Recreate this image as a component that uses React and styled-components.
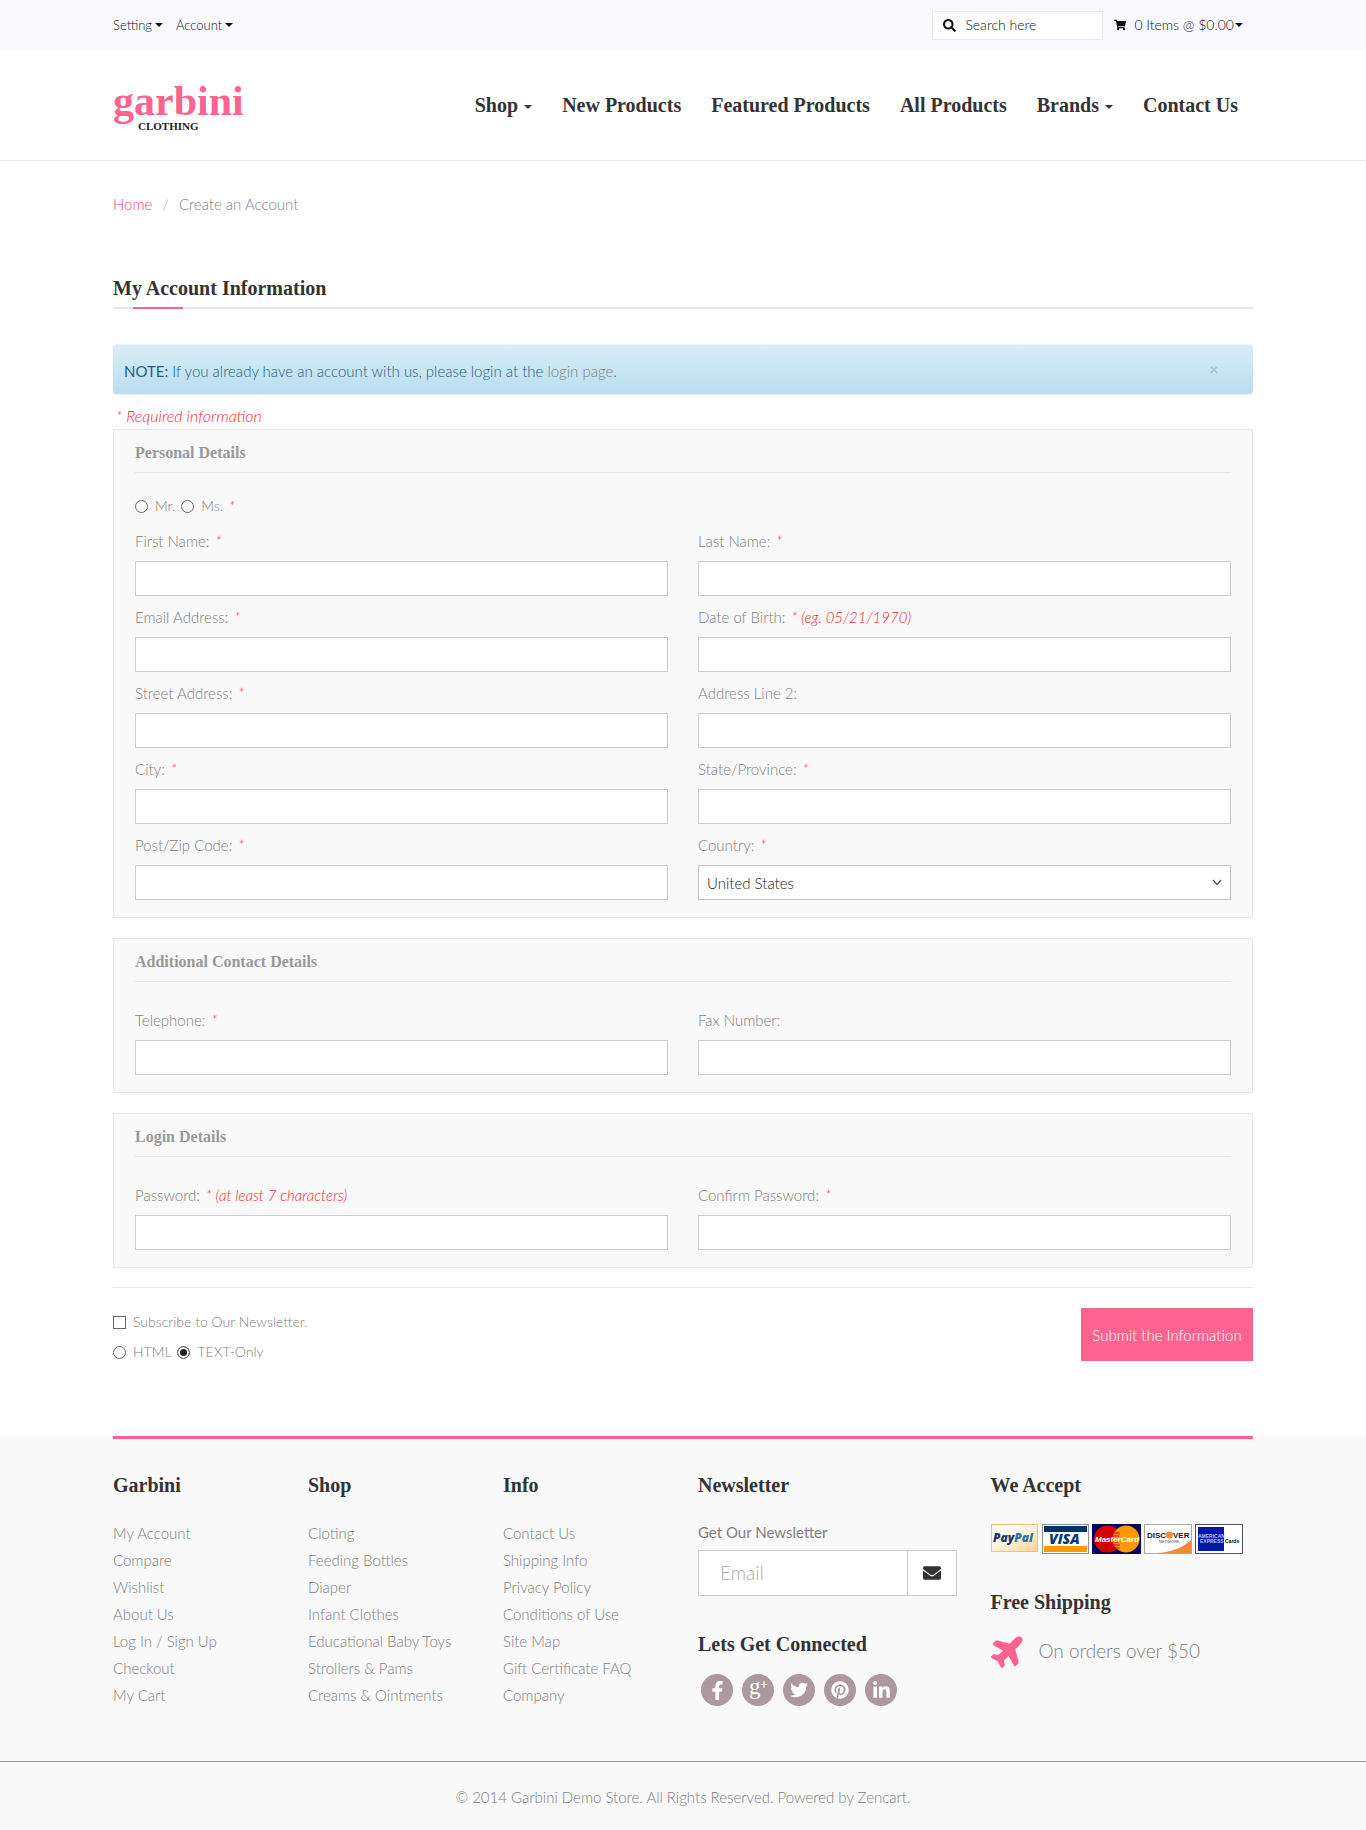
import React from "react";
import styled, { createGlobalStyle } from "styled-components";
import {
  FaSearch,
  FaShoppingCart,
  FaEnvelope,
  FaPlane,
  FaFacebookF,
  FaTwitter,
  FaPinterest,
  FaLinkedinIn,
} from "react-icons/fa";
/** Vars */
const PINK = "#fd638f";
const DARK = "#333333";
const GREY = "#999999";
const TEXT = "#808080";
const LINE = "#e7e7e7";
const SERIF = `"Liberation Serif", serif`;
const SANS = `Lato, "Open Sans", sans-serif`;
//
const GlobalStyle = createGlobalStyle`
  * {
    box-sizing: border-box;
  }
  body {
    margin: 0;
    background: #ffffff;
    color: ${TEXT};
    font: 300 15px/20px ${SANS};
  }
  h1, h2, h3, p, ul, ol {
    margin: 0;
    padding: 0;
    list-style: none;
  }
  a {
    color: inherit;
    text-decoration: none;
  }
  button, input, select {
    font: inherit;
    margin: 0;
  }
`;
/** Layout */
const Container = styled.div`
  max-width: 1140px;
  margin: 0 auto;
`;
const Caret = styled.span`
  display: inline-block;
  border: 4px solid transparent;
  border-top-color: currentColor;
  border-bottom: 0;
  vertical-align: middle;
  margin-left: ${({ $gap }) => $gap || 3}px;
`;
/** Top bar */
const TopBar = styled.div`
  background: #f9f9fe;
`;
const TopInner = styled(Container)`
  display: flex;
  align-items: center;
  justify-content: space-between;
  height: 50px;
  color: #111111;
`;
const TopGroup = styled.div`
  display: flex;
  align-items: center;
  gap: ${({ $gap }) => $gap}px;
  padding-right: 10px;
`;
const TopButton = styled.button`
  display: flex;
  align-items: center;
  padding: 0;
  border: 0;
  background: none;
  color: #111111;
  font-size: ${({ $size }) => $size || 13}px;
  cursor: pointer;

  svg {
    margin-right: 8px;
  }
`;
const Search = styled.label`
  display: flex;
  align-items: center;
  gap: 9px;
  width: 171px;
  height: 29px;
  padding: 0 10px;
  border: 1px solid #e8e8ec;
  background: #ffffff;

  svg {
    flex: none;
  }
  input {
    width: 100%;
    min-width: 0;
    padding: 0;
    border: 0;
    outline: 0;
    font-size: 14px;
  }
  input::placeholder {
    color: #111111;
    opacity: 1;
  }
`;
/** Header */
const Header = styled.header`
  border-bottom: 1px solid ${LINE};
`;
const HeaderInner = styled(Container)`
  display: flex;
  align-items: center;
  justify-content: space-between;
  height: 110px;
`;
const Logo = styled.a`
  display: grid;
  padding-top: 4px;
  font-family: ${SERIF};
  font-weight: 700;
`;
const LogoName = styled.span`
  font-size: 42px;
  line-height: 38px;
  color: ${PINK};
`;
const LogoSub = styled.span`
  padding-left: 25px;
  font-size: 11px;
  line-height: 12px;
  color: #222222;
`;
const Nav = styled.nav`
  display: flex;
  gap: 30px;
  padding-right: 15px;
  font: 700 20px/24px ${SERIF};
  color: ${DARK};
`;
/** Page head */
const Breadcrumb = styled.ol`
  display: flex;
  padding: 33px 0 62px;

  li + li::before {
    content: "/";
    padding: 0 10px;
    color: #bbbbbb;
  }
  a {
    color: #ff3f78;
  }
`;
const PageTitle = styled.h1`
  position: relative;
  padding-bottom: 7px;
  border-bottom: 2px solid ${LINE};
  font: 700 20px/24px ${SERIF};
  color: ${DARK};

  &::after {
    content: "";
    position: absolute;
    left: 20px;
    bottom: -2px;
    width: 50px;
    height: 2px;
    background: ${PINK};
  }
`;
const Alert = styled.div`
  display: flex;
  justify-content: space-between;
  height: 50px;
  margin: 35px 0 12px;
  padding: 17px 34px 0 11px;
  border-radius: 4px;
  background: linear-gradient(#d9edf7, #b9def0);
  box-shadow: 0 1px 2px rgba(0, 0, 0, 0.08), inset 0 1px 0 rgba(255, 255, 255, 0.3);
  color: #1f5f80;

  strong {
    font-weight: 400;
  }
  a {
    color: ${TEXT};
  }
`;
const Close = styled.button`
  width: 10px;
  height: 16px;
  padding: 0;
  border: 0;
  background: none;
  color: #a5c8d9;
  font-size: 16px;
  line-height: 16px;
  font-weight: 700;
`;
const Red = styled.em`
  margin-left: ${({ $gap }) => $gap || 0}px;
  color: #ff1f1f;
  font-style: italic;
`;
const RequiredNote = styled.p`
  padding: 0 3px;
  margin-bottom: 3px;
  font-size: 16px;
`;
/** Form */
const Panel = styled.section`
  margin-bottom: 20px;
  padding: 0 21px 17px;
  border: 1px solid ${LINE};
  background: #f9f9f9;

  &:last-of-type {
    margin-bottom: 0;
  }
`;
const PanelTitle = styled.h2`
  padding: 13px 0 9px;
  border-bottom: 1px solid ${LINE};
  font: 700 16px/20px ${SERIF};
  color: ${GREY};
`;
const TitleRow = styled.div`
  display: flex;
  align-items: center;
  gap: 6px;
  padding-top: 23px;
`;
const Fields = styled.div`
  display: grid;
  grid-template-columns: 1fr 1fr;
  gap: 11px 30px;
  padding-top: ${({ $top }) => $top}px;
`;
const Field = styled.div`
  display: grid;
  gap: 10px;
`;
const TextInput = styled.input`
  width: 100%;
  height: 35px;
  padding: 0 8px;
  border: 1px solid #cccccc;
  background: #ffffff;
`;
const SelectBox = styled.div`
  position: relative;

  select {
    appearance: none;
    display: block;
    width: 100%;
    height: 35px;
    padding: 0 8px;
    border: 1px solid #c2c2c2;
    border-radius: 0;
    background: #ffffff;
    color: #222222;
  }
  svg {
    position: absolute;
    right: 9px;
    top: 14px;
    pointer-events: none;
  }
`;
const Choice = styled.label`
  display: flex;
  align-items: center;
  gap: 7px;
  font-size: 14px;

  input {
    appearance: none;
    flex: none;
    width: 13px;
    height: 13px;
    border: 1px solid #666666;
    background: #ffffff;
  }
  input[type="radio"] {
    border-radius: 50%;
  }
  input:checked {
    background: #222222;
    box-shadow: inset 0 0 0 2px #ffffff;
  }
`;
const Actions = styled.div`
  display: flex;
  align-items: flex-start;
  justify-content: space-between;
  margin: 19px 0 74px;
  padding-top: 20px;
  border-top: 1px solid ${LINE};
`;
const Options = styled.div`
  display: grid;
  gap: 10px;
  padding-top: 4px;
`;
const OptionRow = styled.div`
  display: flex;
  gap: 6px;
`;
const Submit = styled.button`
  width: 172px;
  height: 53px;
  padding: 0;
  border: 0;
  background: ${PINK};
  color: #ffffff;
  cursor: pointer;
`;
/** Footer */
const Footer = styled.footer`
  background: #f9f9f9;
`;
const FooterInner = styled(Container)`
  padding: 34px 0 52px;
  border-top: 3px solid ${PINK};
`;
const FooterGrid = styled.div`
  display: grid;
  grid-template-columns: 2fr 2fr 2fr 3fr 3fr;
  margin: 0 -15px;
`;
const Column = styled.div`
  min-width: 0;
  padding: 0 15px;
  white-space: nowrap;
`;
const FooterTitle = styled.h3`
  margin-bottom: ${({ $gap }) => $gap || 22}px;
  font: 700 20px/24px ${SERIF};
  color: ${DARK};
`;
const FooterLinks = styled.ul`
  line-height: 27px;
`;
const NewsLabel = styled.label`
  display: block;
  margin-bottom: 4px;
  line-height: 27px;
  font-weight: 400;
`;
const NewsForm = styled.form`
  display: flex;
  max-width: 259px;
  height: 46px;
  margin-bottom: 36px;
  border: 1px solid #cccccc;
  background: #ffffff;

  input {
    flex: 1;
    min-width: 0;
    padding: 0 21px;
    border: 0;
    background: none;
    font-size: 19px;
  }
  input::placeholder {
    color: #aaaaaa;
    opacity: 1;
  }
  button {
    display: grid;
    place-items: center;
    width: 49px;
    padding: 0;
    border: 0;
    border-left: 1px solid #cccccc;
    background: none;
    color: ${DARK};
  }
`;
const Socials = styled.div`
  display: flex;
  gap: 9px;
  padding-left: 3px;
`;
const Social = styled.a`
  display: grid;
  place-items: center;
  width: 32px;
  height: 32px;
  border-radius: 50%;
  background: #ab999f;
  color: #ffffff;
`;
const Cards = styled.div`
  display: flex;
  gap: 3px;
  margin-bottom: 36px;

  svg {
    display: block;
  }
`;
const Shipping = styled.p`
  display: flex;
  align-items: center;
  gap: 12px;
  font-size: 19px;
  line-height: 33px;
`;
const Copyright = styled.div`
  padding: 25px 0 24px;
  border-top: 1px solid ${PINK};
  text-align: center;
`;
/** Data */
const personal = [
  { id: "firstname", label: "First Name:", required: true },
  { id: "lastname", label: "Last Name:", required: true },
  { id: "email", label: "Email Address:", required: true, type: "email" },
  { id: "dob", label: "Date of Birth:", required: true, hint: "(eg. 05/21/1970)" },
  { id: "street", label: "Street Address:", required: true },
  { id: "suburb", label: "Address Line 2:" },
  { id: "city", label: "City:", required: true },
  { id: "state", label: "State/Province:", required: true },
  { id: "postcode", label: "Post/Zip Code:", required: true },
  { id: "country", label: "Country:", required: true, options: ["United States"] },
];
const contact = [
  { id: "telephone", label: "Telephone:", required: true, type: "tel" },
  { id: "fax", label: "Fax Number:", type: "tel" },
];
const login = [
  { id: "password", label: "Password:", required: true, hint: "(at least 7 characters)", type: "password" },
  { id: "confirm", label: "Confirm Password:", required: true, type: "password" },
];
const navItems = [
  { text: "Shop", menu: true },
  { text: "New Products" },
  { text: "Featured Products" },
  { text: "All Products" },
  { text: "Brands", menu: true },
  { text: "Contact Us" },
];
const footerLinks = {
  Garbini: ["My Account", "Compare", "Wishlist", "About Us", "Log In / Sign Up", "Checkout", "My Cart"],
  Shop: [
    "Cloting",
    "Feeding Bottles",
    "Diaper",
    "Infant Clothes",
    "Educational Baby Toys",
    "Strollers & Pams",
    "Creams & Ointments",
  ],
  Info: [
    "Contact Us",
    "Shipping Info",
    "Privacy Policy",
    "Conditions of Use",
    "Site Map",
    "Gift Certificate FAQ",
    "Company",
  ],
};
/** Parts */
function FormField({ id, label, required, hint, type, options }) {
  return (
    <Field>
      <label htmlFor={id}>
        {label}
        {required && <Red $gap={6}>*{hint && ` ${hint}`}</Red>}
      </label>
      {options ? (
        <SelectBox>
          <select id={id}>
            {options.map((o) => (
              <option key={o}>{o}</option>
            ))}
          </select>
          <svg width="10" height="7" viewBox="0 0 10 7" fill="none" stroke="#555" strokeWidth="1.3">
            <path d="M1 1l4 4.500L9 1" />
          </svg>
        </SelectBox>
      ) : (
        <TextInput id={id} type={type || "text"} />
      )}
    </Field>
  );
}
//
function PaymentCards() {
  return (
    <Cards>
      <svg width="48" height="29" role="img" aria-label="PayPal">
        <defs>
          <linearGradient id="pp" x1="0" y1="0" x2="1" y2="1">
            <stop offset="0.3" stopColor="#fffdf6" />
            <stop offset="1" stopColor="#fbd48f" />
          </linearGradient>
        </defs>
        <rect x="0.5" y="0.5" width="46" height="27" fill="url(#pp)" stroke="#f5be79" />
        <text x="2" y="18" fontFamily="Open Sans" fontWeight="800" fontStyle="italic" fontSize="12" fill="#1c3667">
          Pay<tspan fill="#2a72a8">Pal</tspan>
        </text>
      </svg>
      <svg width="47" height="30" role="img" aria-label="Visa">
        <rect x="0.5" y="0.5" width="46" height="29" fill="#fff" stroke="#8890a5" />
        <rect x="2" y="2" width="43" height="6" fill="#003263" />
        <rect x="2" y="22" width="43" height="6" fill="#ff9a00" />
        <text x="7" y="20" fontFamily="Open Sans" fontWeight="800" fontStyle="italic" fontSize="14" fill="#003a70">
          VISA
        </text>
      </svg>
      <svg width="49" height="30" role="img" aria-label="MasterCard">
        <rect width="49" height="30" fill="#00005e" />
        <circle cx="15.5" cy="15" r="13.5" fill="#d40000" />
        <circle cx="34" cy="15" r="13.5" fill="#ff9900" />
        <path d="M21 9h7M20 12h7M20 18h7M21 21h7M23 24h5" stroke="#d40000" />
        <text x="3" y="18" fontFamily="Liberation Sans" fontWeight="700" fontStyle="italic" fontSize="8" fill="#fff">
          MasterCard
        </text>
      </svg>
      <svg width="48" height="30" role="img" aria-label="Discover">
        <rect x="0.5" y="0.5" width="47" height="29" fill="#fff" stroke="#aaa" />
        <path d="M14 29C28 28 40 23 47 16V29z" fill="#f6883a" />
        <circle cx="25.5" cy="11" r="3.5" fill="#f58a3c" />
        <text x="3" y="14" fontFamily="Liberation Sans" fontWeight="700" fontSize="8" fill="#222">
          DISC
        </text>
        <text x="29" y="14" fontFamily="Liberation Sans" fontWeight="700" fontSize="8" fill="#222">
          VER
        </text>
        <text x="15" y="19" fontFamily="Liberation Sans" fontSize="4" fill="#444">
          NETWORK
        </text>
      </svg>
      <svg width="48" height="30" role="img" aria-label="American Express">
        <rect x="0.5" y="0.5" width="47" height="29" fill="#fff" stroke="#555" />
        <rect x="3" y="3" width="26" height="24" fill="#0018a8" />
        <text x="3" y="14" fontFamily="Liberation Sans" fontWeight="700" fontSize="5" fill="#b9c3f0">
          AMERICAN
        </text>
        <text x="5" y="19" fontFamily="Liberation Sans" fontWeight="700" fontSize="5" fill="#b9c3f0">
          EXPRESS
        </text>
        <text x="30" y="19" fontFamily="Liberation Sans" fontWeight="700" fontSize="5" fill="#000">
          Cards
        </text>
      </svg>
    </Cards>
  );
}
//
function SocialLinks() {
  return (
    <Socials>
      <Social href="#" aria-label="Facebook">
        <FaFacebookF size={19} />
      </Social>
      <Social href="#" aria-label="Google Plus">
        <svg width="32" height="32" fill="#fff" fontFamily="Liberation Serif">
          <text x="7" y="20" fontSize="23">
            g
          </text>
          <text x="18" y="15" fontSize="14" fontWeight="700">
            +
          </text>
        </svg>
      </Social>
      <Social href="#" aria-label="Twitter">
        <FaTwitter size={18} />
      </Social>
      <Social href="#" aria-label="Pinterest">
        <FaPinterest size={18} />
      </Social>
      <Social href="#" aria-label="LinkedIn">
        <FaLinkedinIn size={19} />
      </Social>
    </Socials>
  );
}
/** Exports */
export default function App() {
  return (
    <>
      <GlobalStyle />
      <TopBar>
        <TopInner>
          <TopGroup $gap={13}>
            <TopButton>
              Setting
              <Caret />
            </TopButton>
            <TopButton>
              Account
              <Caret />
            </TopButton>
          </TopGroup>
          <TopGroup $gap={11}>
            <Search>
              <FaSearch size={13} />
              <input type="text" placeholder="Search here" aria-label="Search" />
            </Search>
            <TopButton $size={14}>
              <FaShoppingCart size={12} />0 Items @ $0.00
              <Caret $gap={1} />
            </TopButton>
          </TopGroup>
        </TopInner>
      </TopBar>
      <Header>
        <HeaderInner>
          <Logo href="#">
            <LogoName>garbini</LogoName>
            <LogoSub>CLOTHING</LogoSub>
          </Logo>
          <Nav>
            {navItems.map(({ text, menu }) => (
              <a href="#" key={text}>
                {text}
                {menu && <Caret $gap={6} />}
              </a>
            ))}
          </Nav>
        </HeaderInner>
      </Header>
      <Container as="main">
        <Breadcrumb>
          <li>
            <a href="#">Home</a>
          </li>
          <li>Create an Account</li>
        </Breadcrumb>
        <PageTitle>My Account Information</PageTitle>
        <Alert>
          <p>
            <strong>NOTE:</strong> If you already have an account with us, please login at the{" "}
            <a href="#">login page</a>.
          </p>
          <Close aria-label="Close">×</Close>
        </Alert>
        <RequiredNote>
          <Red>* Required information</Red>
        </RequiredNote>
        <form>
          <Panel>
            <PanelTitle>Personal Details</PanelTitle>
            <TitleRow>
              <Choice>
                <input type="radio" name="gender" />
                Mr.
              </Choice>
              <Choice>
                <input type="radio" name="gender" />
                Ms.
              </Choice>
              <Red>*</Red>
            </TitleRow>
            <Fields $top={15}>
              {personal.map((f) => (
                <FormField key={f.id} {...f} />
              ))}
            </Fields>
          </Panel>
          <Panel>
            <PanelTitle>Additional Contact Details</PanelTitle>
            <Fields $top={28}>
              {contact.map((f) => (
                <FormField key={f.id} {...f} />
              ))}
            </Fields>
          </Panel>
          <Panel>
            <PanelTitle>Login Details</PanelTitle>
            <Fields $top={28}>
              {login.map((f) => (
                <FormField key={f.id} {...f} />
              ))}
            </Fields>
          </Panel>
          <Actions>
            <Options>
              <Choice>
                <input type="checkbox" />
                Subscribe to Our Newsletter.
              </Choice>
              <OptionRow>
                <Choice>
                  <input type="radio" name="format" />
                  HTML
                </Choice>
                <Choice>
                  <input type="radio" name="format" defaultChecked />
                  TEXT-Only
                </Choice>
              </OptionRow>
            </Options>
            <Submit type="button">Submit the Information</Submit>
          </Actions>
        </form>
      </Container>
      <Footer>
        <FooterInner>
          <FooterGrid>
            {Object.entries(footerLinks).map(([title, links]) => (
              <Column key={title}>
                <FooterTitle $gap={23}>{title}</FooterTitle>
                <FooterLinks>
                  {links.map((text) => (
                    <li key={text}>
                      <a href="#">{text}</a>
                    </li>
                  ))}
                </FooterLinks>
              </Column>
            ))}
            <Column>
              <FooterTitle>Newsletter</FooterTitle>
              <NewsLabel htmlFor="newsletter">Get Our Newsletter</NewsLabel>
              <NewsForm>
                <input id="newsletter" type="email" placeholder="Email" />
                <button type="button" aria-label="Subscribe">
                  <FaEnvelope size={18} />
                </button>
              </NewsForm>
              <FooterTitle $gap={18}>Lets Get Connected</FooterTitle>
              <SocialLinks />
            </Column>
            <Column>
              <FooterTitle $gap={27}>We Accept</FooterTitle>
              <PaymentCards />
              <FooterTitle $gap={18}>Free Shipping</FooterTitle>
              <Shipping>
                <FaPlane size={36} color={PINK} transform="rotate(-45)" />
                On orders over $50
              </Shipping>
            </Column>
          </FooterGrid>
        </FooterInner>
        <Copyright>© 2014 Garbini Demo Store. All Rights Reserved. Powered by Zencart.</Copyright>
      </Footer>
    </>
  );
}
